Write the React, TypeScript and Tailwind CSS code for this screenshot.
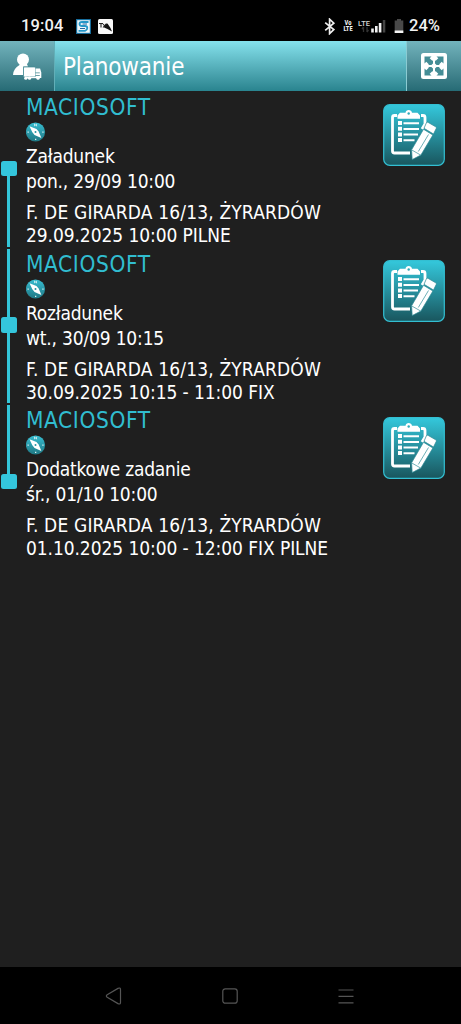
import React from 'react';

interface Task {
  company: string;
  kind: string;
  date: string;
  address: string;
  window: string;
}

const tasks: Task[] = [
  {
    company: 'MACIOSOFT',
    kind: 'Załadunek',
    date: 'pon., 29/09 10:00',
    address: 'F. DE GIRARDA 16/13, ŻYRARDÓW',
    window: '29.09.2025 10:00 PILNE',
  },
  {
    company: 'MACIOSOFT',
    kind: 'Rozładunek',
    date: 'wt., 30/09 10:15',
    address: 'F. DE GIRARDA 16/13, ŻYRARDÓW',
    window: '30.09.2025 10:15 - 11:00 FIX',
  },
  {
    company: 'MACIOSOFT',
    kind: 'Dodatkowe zadanie',
    date: 'śr., 01/10 10:00',
    address: 'F. DE GIRARDA 16/13, ŻYRARDÓW',
    window: '01.10.2025 10:00 - 12:00 FIX PILNE',
  },
];

function StatusBar() {
  return (
    <div className="flex h-[41px] shrink-0 items-center bg-black pt-[11px] pl-[21px] font-['Roboto',sans-serif] font-medium text-[#f2f2f2] font-stretch-normal">
      <span className="w-[55px] text-[16.5px] leading-none tracking-[0.1px]">19:04</span>
      <svg className="h-[15px] w-[15px]" viewBox="0 0 15 15">
        <rect width="15" height="15" fill="#176d9c" />
        <rect x="1.2" y="1.2" width="12.6" height="12.6" fill="#eef8fc" />
        <path d="M12.5 3H6Q3.5 3 3.5 5T6 7h3q2.3 0 2.3 2T9 11.8H2.5" fill="none" stroke="#2597c8" strokeWidth="1.8" />
        <path d="M11 5H6.5M4 9.5h5" stroke="#29639b" strokeWidth="1" />
      </svg>
      <svg className="ml-[7px] h-[15px] w-[15px]" viewBox="0 0 15 15">
        <rect width="15" height="15" rx="1.5" fill="#f8f8f8" />
        <path d="M1 4.5h4M3 4.5v4M5 5l3 3.5M8.5 4.5 5 8.5" stroke="#222" strokeWidth="1.1" />
        <path d="m7.500 5.500 2-1L12.500 9l1.500 3.500-4.500-2.500L6 8.500z" fill="#111" />
      </svg>
      <svg className="ml-[211px] h-[17px] w-[12px]" viewBox="0 0 12 17" fill="none" stroke="#eee" strokeWidth="1.7">
        <path d="m1.2 4.6 8.6 7-4.2 4V1.2l4.2 4-8.6 7.2" />
      </svg>
      <span className="ml-[7px] flex w-[10px] flex-col items-center text-[6.5px] leading-[6px] font-bold font-stretch-condensed">
        <span>Vo</span>
        <span>LTE</span>
      </span>
      <svg className="ml-[5px] h-[15px] w-[28px]" viewBox="0 0 28 15">
        <text x="0" y="6.500" fill="#d5d5d5" fontSize="8" fontWeight="500" textLength="12" lengthAdjust="spacingAndGlyphs">LTE</text>
        <path d="M5.500 8v5M9 8v5M4 10l1.500-2M9 13l1.500-2" stroke="#333" strokeWidth="1.3" />
        <path d="M13.200 9.500h2.600v4h-2.600zM17 7h2.600v6.500H17zM20.800 4h2.600v9.500h-2.600z" fill="#f2f2f2" />
        <path d="M24.800 1h2.500v12.500h-2.500z" fill="#444" />
      </svg>
      <svg className="ml-[8px] h-[15px] w-[10px]" viewBox="0 0 10 15">
        <path d="M3 0h4v1.5h2.3V14H.7V1.5H3z" fill="#494949" />
        <path d="M.7 11.5h8.6V14H.7z" fill="#f5f5f5" />
      </svg>
      <span className="ml-[5px] text-[16.5px] leading-none">24%</span>
    </div>
  );
}

function DriverIcon() {
  return (
    <svg className="h-[27px] w-[29px]" viewBox="0 0 29 27" fill="white">
      <circle cx="10" cy="6.5" r="6" />
      <path d="M6.500 10h7l1.500 3.500H10V22H0q.3-6.500 6.500-10z" />
      <rect x="10.5" y="14" width="12" height="10" rx="1" stroke="#3f8993" strokeWidth=".7" />
      <path d="M22.500 15.500h4.600l1.200 4V25h-5.800v-2.200h4.300v-.9h-4.300v-1.700h4.300v-.8h-4.300z" />
      <path d="M12 24h15v1.200H12z" />
      <circle cx="12.800" cy="25.200" r="1.600" />
      <circle cx="16.500" cy="25.200" r="1.600" />
      <circle cx="25" cy="25.200" r="1.600" />
    </svg>
  );
}

function ExpandIcon() {
  return (
    <svg className="h-[26px] w-[26px]" viewBox="0 0 26 26">
      <rect width="26" height="26" rx="2.5" fill="white" />
      <g fill="#448d96">
        {[0, 90, 180, 270].map((angle) => (
          <path
            key={angle}
            d="M3.5 3.5h7L8.7 5.3l2.3 2.2 1 .3v2.6L10.4 12H7.8l-.3-1-2.2-2.3-1.8 1.8z"
            transform={`rotate(${angle} 13 13)`}
          />
        ))}
      </g>
    </svg>
  );
}

function CompassIcon() {
  return (
    <svg className="h-[20px] w-[20px]" viewBox="0 0 20 20">
      <defs>
        <linearGradient id="compass" x1="0" y1="0" x2="0" y2="1">
          <stop offset="0" stopColor="#37bed2" />
          <stop offset="1" stopColor="#1f7783" />
        </linearGradient>
      </defs>
      <circle cx="9.500" cy="10" r="9.600" fill="url(#compass)" />
      <path d="m3.500 4.200 7 2.800 2.100 2.500 2.800 6.500-6.900-3.100L6.200 10z" fill="white" />
      <circle cx="9.500" cy="9.900" r="1" fill="#2895a3" />
      <path d="M8.500 4.200V1.800l2 2.400V1.800" fill="none" stroke="#d8f1f4" strokeWidth=".8" />
      <path d="M1.500 9.500h1.300v1.300H1.500zM16.300 9.500h1.300v1.300h-1.300zM9 16.800h1.300v1.300H9z" fill="#d8f1f4" />
    </svg>
  );
}

function FormIcon() {
  return (
    <svg className="h-[62px] w-[62px]" viewBox="0 0 62 62">
      <defs>
        <linearGradient id="form" x1="0" y1="0" x2="0" y2="1">
          <stop offset="0" stopColor="#34c8dc" />
          <stop offset="1" stopColor="#19565e" />
        </linearGradient>
      </defs>
      <rect x=".7" y=".7" width="60.6" height="60.6" rx="6" fill="url(#form)" stroke="#33bfd2" strokeWidth="1.2" />
      <path d="M14 11.500h-2.500q-2 0-2 2V47q0 2 2 2H27M38 11.500h2q2 0 2 2V20l-3 5" fill="none" stroke="white" strokeWidth="2.800" />
      <path d="M14.500 14.800v-3.300l2.500-2.800h5.500Q23 6 25.700 6T29 8.700h5.500l2.500 2.800v3.300z" fill="white" />
      <circle cx="25.700" cy="9.500" r="1.200" fill="#31abba" />
      <g fill="white">
        <path d="M15 17h4v4h-4zM15 22.700h4v4h-4zM15 28.400h4v4h-4zM15 34.100h4v4h-4z" />
        <path d="M20.500 18.200h15.500v2H20.500zM20.500 23.900h15.500v2H20.500zM20.500 29.600h14.500v2H20.500zM20.500 35.300h11v2h-11z" />
      </g>
      <path
        d="M43.500 18.500q.8-.6 1.800 0l7.400 4.300q1 .7.500 1.700L50.500 30 41 24.300zM40.500 25.300l9.400 5.700-12 20-8.700 4.600-.6-9.800z"
        fill="white"
        stroke="#2b8894"
        strokeWidth=".7"
      />
      <path d="M45.500 30.500 35.300 47.500M28.800 46l8.800 5" stroke="#4a9ca6" strokeWidth=".8" />
    </svg>
  );
}

function Header() {
  return (
    <header className="flex h-[50px] shrink-0 bg-gradient-to-b from-[#85e2ed] to-[#29848f]">
      <button className="flex w-[55px] items-center justify-center border-r border-[#62afb8] bg-gradient-to-b from-[#73b4bd] to-[#266b75]">
        <DriverIcon />
      </button>
      <h1 className="flex-1 pl-[8px] text-[24px] leading-[53px] tracking-[-0.17px] text-white">Planowanie</h1>
      <button className="flex w-[55px] items-center justify-center border-l border-[#8bcbd2] bg-gradient-to-b from-[#73b4bd] to-[#266b75]">
        <ExpandIcon />
      </button>
    </header>
  );
}

interface TaskRowProps {
  task: Task;
  isFirst: boolean;
  isLast: boolean;
}

function TaskRow({ task, isFirst, isLast }: TaskRowProps) {
  return (
    <li className="flex h-[156.7px]">
      {/* Timeline */}
      <div className="flex w-[26px] flex-col items-start pt-px pb-px pl-[1.3px]">
        <div className={`ml-[6.2px] h-[68.5px] w-[2.6px] ${isFirst ? '' : 'bg-[#34c6d9]'}`} />
        <div className="h-[15.6px] w-[15.6px] rounded-[2.5px] bg-[#34c6dc]" />
        <div className={`ml-[6.2px] w-[2.6px] flex-1 ${isLast ? '' : 'bg-[#34c6d9]'}`} />
      </div>

      <div className="flex-1 whitespace-nowrap text-white">
        <h2 className="h-[31px] text-[22.5px] leading-[32px] tracking-[0.6px] text-[#31bdd0]">{task.company}</h2>
        <CompassIcon />
        <p className="mt-[2px] h-[25px] text-[19px] leading-[25px] tracking-[-0.21px]">{task.kind}</p>
        <p className="h-[25px] text-[19px] leading-[25px] tracking-[-0.18px]">{task.date}</p>
        <p className="mt-[7px] h-[23px] text-[19px] leading-[23px] tracking-[0.16px]">{task.address}</p>
        <p className="h-[23px] text-[19px] leading-[23px] tracking-[-0.08px]">{task.window}</p>
      </div>

      <button className="mt-[12.5px] mr-[16px] h-[62px] w-[62px]">
        <FormIcon />
      </button>
    </li>
  );
}

function NavigationBar() {
  return (
    <nav className="flex h-[57px] shrink-0 items-center justify-between bg-black pr-[107px] pl-[105px] text-[#555]">
      <svg className="h-[18px] w-[17px]" viewBox="0 0 17 18" fill="none" stroke="currentColor" strokeWidth="1.2">
        <path d="M2.2 7.8 13 1.4q2.5-1.2 2.5 1.2v12.8q0 2.4-2.5 1.2L2.2 10.2q-1.7-1.2 0-2.4z" />
      </svg>
      <svg className="h-[16px] w-[16px]" viewBox="0 0 16 16" fill="none" stroke="currentColor" strokeWidth="1.2">
        <rect x=".8" y=".8" width="14.4" height="14.4" rx="2.5" />
      </svg>
      <svg className="h-[16px] w-[16px]" viewBox="0 0 16 16" fill="none" stroke="currentColor" strokeWidth="1.2">
        <path d="M.5 2h15M.5 8.4h15M.5 14.8h15" />
      </svg>
    </nav>
  );
}

export default function App() {
  return (
    <div className="flex h-[1024px] w-[461px] flex-col overflow-hidden bg-[#1f1f1f] font-['Tahoma','DejaVu_Sans_Condensed','DejaVu_Sans',sans-serif] font-stretch-condensed">
      <StatusBar />
      <Header />
      <ul className="flex-1">
        {tasks.map((task, index) => (
          <TaskRow key={task.window} task={task} isFirst={index === 0} isLast={index === tasks.length - 1} />
        ))}
      </ul>
      <NavigationBar />
    </div>
  );
}
